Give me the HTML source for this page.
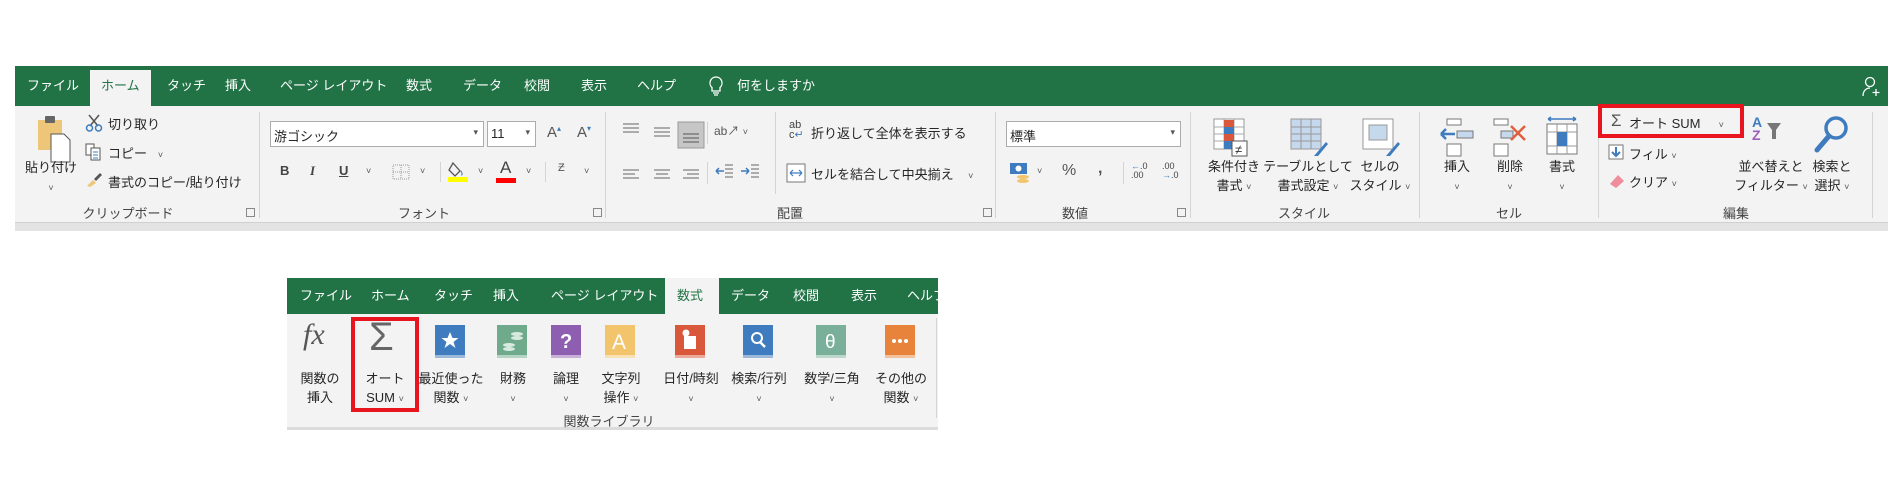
<!DOCTYPE html>
<html><head><meta charset="utf-8"><style>
*{margin:0;padding:0;box-sizing:border-box}
body{width:1900px;height:491px;background:#fff;position:relative;overflow:hidden;font-family:"Liberation Sans","Noto Sans CJK JP",sans-serif;font-size:13px;color:#262626}
.a{position:absolute;white-space:nowrap}
.g{background:#217346}
.tab{position:absolute;color:#fff;font-size:13px;top:0;line-height:40px}
.sep{position:absolute;width:1px;background:#d4d4d4}
.lbl{position:absolute;font-size:13px;color:#444;transform:translateX(-50%)}
.c{transform:translateX(-50%);text-align:center;line-height:19px}
.chev{font-size:9px;color:#555}
.dl{position:absolute;width:9px;height:9px;border:1px solid #888}
.box{position:absolute;background:#fff;border:1px solid #acacac}
</style></head><body>

<!-- TOP RIBBON -->
<div class="a g" style="left:15px;top:66px;width:1873px;height:40px">
 <span class="tab" style="left:12px">ファイル</span>
 <div style="position:absolute;left:75px;top:4px;width:61px;height:36px;background:#f3f3f3"></div>
 <span class="tab" style="left:86px;color:#217346">ホーム</span>
 <span class="tab" style="left:152px">タッチ</span>
 <span class="tab" style="left:210px">挿入</span>
 <span class="tab" style="left:265px">ページ レイアウト</span>
 <span class="tab" style="left:391px">数式</span>
 <span class="tab" style="left:448px">データ</span>
 <span class="tab" style="left:509px">校閲</span>
 <span class="tab" style="left:566px">表示</span>
 <span class="tab" style="left:622px">ヘルプ</span>
 <svg class="a" style="left:694px;top:10px" width="14" height="20" viewBox="0 0 14 20"><path d="M7 1a6 6 0 0 0-4 10.5V15h8v-3.5A6 6 0 0 0 7 1zM4 17h6M5 19h4" fill="none" stroke="#fff" stroke-width="1.3"/></svg>
 <span class="tab" style="left:722px">何をしますか</span>
 <svg class="a" style="left:1847px;top:10px" width="22" height="22" viewBox="0 0 22 22"><circle cx="8" cy="6" r="4.5" fill="none" stroke="#fff" stroke-width="1.3"/><path d="M1 20c0-5 3-8 7-8M14 13v7M10.5 16.5h7" fill="none" stroke="#fff" stroke-width="1.3"/></svg>
</div>
<div class="a" style="left:15px;top:106px;width:1873px;height:116px;background:#f3f3f3"></div>
<div class="a" style="left:15px;top:222px;width:1873px;height:9px;background:#e3e3e3;border-top:1px solid #d0d0d0"></div>

<!-- separators -->
<div class="sep" style="left:259px;top:112px;height:106px"></div>
<div class="sep" style="left:605px;top:112px;height:106px"></div>
<div class="sep" style="left:995px;top:112px;height:106px"></div>
<div class="sep" style="left:1190px;top:112px;height:106px"></div>
<div class="sep" style="left:1419px;top:112px;height:106px"></div>
<div class="sep" style="left:1598px;top:112px;height:106px"></div>
<div class="sep" style="left:1872px;top:112px;height:106px"></div>

<!-- group labels -->
<span class="lbl" style="left:128px;top:203px">クリップボード</span>
<span class="lbl" style="left:424px;top:203px">フォント</span>
<span class="lbl" style="left:790px;top:203px">配置</span>
<span class="lbl" style="left:1075px;top:203px">数値</span>
<span class="lbl" style="left:1304px;top:203px">スタイル</span>
<span class="lbl" style="left:1509px;top:203px">セル</span>
<span class="lbl" style="left:1736px;top:203px">編集</span>
<div class="dl" style="left:246px;top:208px"></div>
<div class="dl" style="left:593px;top:208px"></div>
<div class="dl" style="left:983px;top:208px"></div>
<div class="dl" style="left:1177px;top:208px"></div>

<!-- Clipboard -->
<svg class="a" style="left:36px;top:114px" width="40" height="52" viewBox="0 0 40 52"><rect x="2" y="6" width="24" height="30" fill="#eec67a"/><rect x="9" y="2" width="10" height="7" rx="1" fill="#666"/><path d="M15 20h13l6 6v22H15z" fill="#fff" stroke="#555"/></svg>
<span class="a c" style="left:51px;top:158px">貼り付け<br><span class="chev">˅</span></span>
<svg class="a" style="left:85px;top:114px" width="18" height="18" viewBox="0 0 18 18"><path d="M4 1l9 11M14 1L5 12" stroke="#555" stroke-width="1.5"/><circle cx="4.5" cy="14" r="3" fill="none" stroke="#3e7bbf" stroke-width="1.5"/><circle cx="13.5" cy="14" r="3" fill="none" stroke="#3e7bbf" stroke-width="1.5"/></svg>
<span class="a" style="left:108px;top:114px">切り取り</span>
<svg class="a" style="left:85px;top:143px" width="18" height="18" viewBox="0 0 18 18"><path d="M1 1h8v11H1z" fill="#fff" stroke="#555"/><path d="M6 5h9v12H6z" fill="#fff" stroke="#555"/><path d="M8 9h5M8 12h5M8 15h5" stroke="#3e7bbf"/></svg>
<span class="a" style="left:108px;top:143px">コピー &nbsp; <span class="chev">˅</span></span>
<svg class="a" style="left:85px;top:172px" width="18" height="16" viewBox="0 0 18 16"><path d="M2 14l6-6 3 3-6 4z" fill="#eec67a"/><path d="M9 7l6-6 2 2-6 6z" fill="#555"/></svg>
<span class="a" style="left:108px;top:172px">書式のコピー/貼り付け</span>

<!-- Font -->
<div class="box" style="left:270px;top:121px;width:214px;height:26px"><span class="a" style="left:3px;top:4px">游ゴシック</span><span class="a chev" style="right:5px;top:5px">▾</span></div>
<div class="box" style="left:487px;top:121px;width:49px;height:26px"><span class="a" style="left:3px;top:4px">11</span><span class="a chev" style="right:5px;top:5px">▾</span></div>
<span class="a" style="left:547px;top:124px;font-size:15px;color:#555">A<sup style="font-size:8px;color:#3e7bbf">▴</sup></span>
<span class="a" style="left:577px;top:124px;font-size:15px;color:#555">A<sup style="font-size:8px;color:#3e7bbf">▾</sup></span>
<span class="a" style="left:280px;top:163px;font-weight:bold;color:#444">B</span>
<span class="a" style="left:310px;top:163px;font-style:italic;font-family:'Liberation Serif',serif;font-weight:bold;color:#444">I</span>
<span class="a" style="left:339px;top:163px;text-decoration:underline;font-weight:bold;color:#444">U</span>
<span class="a chev" style="left:366px;top:166px">˅</span>
<svg class="a" style="left:392px;top:164px" width="18" height="16"><rect x="1" y="1" width="16" height="14" fill="none" stroke="#999" stroke-dasharray="1 1"/><path d="M9 1v14M1 8h16" stroke="#999" stroke-dasharray="1 1"/></svg>
<span class="a chev" style="left:420px;top:166px">˅</span>
<div class="sep" style="left:440px;top:162px;height:20px"></div>
<svg class="a" style="left:448px;top:159px" width="22" height="24"><path d="M5 4l7 8-5 5-6-6z" fill="none" stroke="#555" stroke-width="1.3"/><path d="M13 12c1 2 2 4 0 4" stroke="#3e7bbf" fill="none"/><rect x="0" y="18" width="20" height="5" fill="#ffff00"/></svg>
<span class="a chev" style="left:478px;top:166px">˅</span>
<span class="a" style="left:500px;top:158px;font-size:17px;color:#444">A</span>
<div class="a" style="left:496px;top:178px;width:20px;height:5px;background:#ff0000"></div>
<span class="a chev" style="left:526px;top:166px">˅</span>
<div class="sep" style="left:545px;top:162px;height:20px"></div>
<span class="a" style="left:558px;top:162px;font-size:11px;color:#555">Ƶ</span>
<span class="a chev" style="left:584px;top:166px">˅</span>

<!-- Alignment -->
<svg class="a" style="left:621px;top:120px" width="100" height="70" viewBox="0 0 100 70">
 <g stroke="#666" stroke-width="1"><path d="M2 4h16M2 8h16M2 12h16"/><path d="M33 8h16M33 12h16M33 16h16"/></g>
 <rect x="57" y="2" width="26" height="26" fill="#c6c6c6" stroke="#999"/><path d="M62 14h16M62 18h16M62 22h16" stroke="#555"/>
 <g stroke="#666"><path d="M2 50h16M2 54h12M2 58h16"/><path d="M33 50h16M35 54h12M33 58h16"/><path d="M62 50h16M66 54h12M62 58h16"/></g>
</svg>
<div class="sep" style="left:707px;top:122px;height:22px"></div>
<span class="a" style="left:714px;top:122px;color:#555;font-size:12px">ab↗ <span class="chev">˅</span></span>
<svg class="a" style="left:714px;top:162px" width="45" height="20"><g stroke="#3e7bbf" stroke-width="1.5"><path d="M2 9h8M2 9l3-3M2 9l3 3M27 9h8M35 9l-3-3M35 9l-3 3"/></g><path d="M11 3h8M11 7h8M11 11h8M11 15h8M37 3h8M37 7h8M37 11h8M37 15h8" stroke="#666"/></svg>
<div class="sep" style="left:740px;top:162px;height:22px;left:707px"></div>
<div class="sep" style="left:775px;top:112px;height:82px"></div>
<span class="a" style="left:789px;top:120px;font-size:11px;line-height:10px;color:#444">ab<br>c<span style="color:#3e7bbf">↵</span></span>
<span class="a" style="left:811px;top:123px">折り返して全体を表示する</span>
<svg class="a" style="left:786px;top:163px" width="20" height="20"><rect x="1" y="1" width="18" height="18" fill="#fff" stroke="#777"/><path d="M4 10h12M4 10l3-3M4 10l3 3M16 10l-3-3M16 10l-3 3" stroke="#3e7bbf" stroke-width="1.2" fill="none"/></svg>
<span class="a" style="left:811px;top:164px">セルを結合して中央揃え &nbsp; &nbsp;<span class="chev">˅</span></span>

<!-- Number -->
<div class="box" style="left:1006px;top:121px;width:175px;height:26px"><span class="a" style="left:3px;top:4px">標準</span><span class="a chev" style="right:5px;top:5px">▾</span></div>
<svg class="a" style="left:1009px;top:162px" width="22" height="22"><rect x="1" y="1" width="17" height="11" fill="#3e7bbf"/><circle cx="9.5" cy="6.5" r="3" fill="#fff"/><ellipse cx="14" cy="15" rx="6" ry="2" fill="#f2c46b"/><ellipse cx="14" cy="19" rx="6" ry="2" fill="#f2c46b"/></svg>
<span class="a chev" style="left:1037px;top:166px">˅</span>
<span class="a" style="left:1062px;top:162px;font-size:16px;color:#555">%</span>
<span class="a" style="left:1098px;top:160px;font-size:16px;font-weight:bold;color:#555">,</span>
<div class="sep" style="left:1123px;top:162px;height:22px"></div>
<span class="a" style="left:1131px;top:162px;font-size:9px;line-height:9px;color:#444"><span style="color:#3e7bbf">←</span>.0<br>.00</span>
<span class="a" style="left:1162px;top:162px;font-size:9px;line-height:9px;color:#444">.00<br><span style="color:#3e7bbf">→</span>.0</span>

<!-- Styles -->
<svg class="a" style="left:1213px;top:118px" width="36" height="40"><g fill="#fff" stroke="#999"><rect x="1" y="1" width="30" height="30"/></g><path d="M1 9h30M1 16h30M1 23h30M11 1v30M21 1v30" stroke="#aaa"/><rect x="11" y="2" width="10" height="7" fill="#d9573a"/><rect x="11" y="9" width="10" height="7" fill="#3e7bbf"/><rect x="11" y="16" width="10" height="7" fill="#d9573a"/><rect x="11" y="23" width="10" height="8" fill="#3e7bbf"/><rect x="19" y="23" width="15" height="15" fill="#fff" stroke="#555"/><text x="22" y="36" font-size="13" fill="#333">≠</text></svg>
<span class="a c" style="left:1234px;top:157px">条件付き<br>書式 <span class="chev">˅</span></span>
<svg class="a" style="left:1290px;top:118px" width="38" height="40"><rect x="1" y="1" width="30" height="30" fill="#c5d8ec" stroke="#999"/><path d="M1 9h30M1 16h30M1 23h30M11 1v30M21 1v30" stroke="#999"/><path d="M24 38l12-14 2 2-10 12z" fill="#3e7bbf"/></svg>
<span class="a c" style="left:1308px;top:157px">テーブルとして<br>書式設定 <span class="chev">˅</span></span>
<svg class="a" style="left:1362px;top:118px" width="38" height="40"><rect x="1" y="1" width="30" height="30" fill="#fff" stroke="#999"/><rect x="7" y="7" width="18" height="15" fill="#c5d8ec" stroke="#999"/><path d="M24 38l12-14 2 2-10 12z" fill="#3e7bbf"/></svg>
<span class="a c" style="left:1380px;top:157px">セルの<br>スタイル <span class="chev">˅</span></span>

<!-- Cells -->
<svg class="a" style="left:1440px;top:118px" width="34" height="40"><g fill="#fff" stroke="#777"><rect x="7" y="1" width="14" height="6"/><rect x="7" y="26" width="14" height="12"/><rect x="17" y="13" width="16" height="7" fill="#c5d8ec"/></g><path d="M1 16h14M1 16l5-5M1 16l5 5" stroke="#3e7bbf" stroke-width="2.5" fill="none"/></svg>
<span class="a c" style="left:1457px;top:157px">挿入<br><span class="chev">˅</span></span>
<svg class="a" style="left:1493px;top:118px" width="36" height="40"><g fill="#fff" stroke="#777"><rect x="1" y="1" width="14" height="6"/><rect x="1" y="26" width="14" height="12"/><rect x="8" y="13" width="12" height="7" fill="#c5d8ec"/></g><path d="M18 8l14 14M32 8L18 22" stroke="#e0603e" stroke-width="2.5"/></svg>
<span class="a c" style="left:1510px;top:157px">削除<br><span class="chev">˅</span></span>
<svg class="a" style="left:1545px;top:116px" width="34" height="42"><path d="M3 3h28M3 3l3-2M3 3l3 2M31 3l-3-2M31 3l-3 2" stroke="#3e7bbf" stroke-width="1.5" fill="none"/><rect x="2" y="8" width="30" height="30" fill="#fff" stroke="#777"/><path d="M2 16h30M2 30h30M12 8v30M22 8v30" stroke="#999"/><rect x="12" y="16" width="10" height="14" fill="#3e7bbf"/></svg>
<span class="a c" style="left:1562px;top:157px">書式<br><span class="chev">˅</span></span>

<!-- Editing -->
<div class="a" style="left:1598px;top:104px;width:146px;height:34px;border:4px solid #e8141e"></div>
<span class="a" style="left:1611px;top:112px;font-size:17px;color:#555;line-height:18px">Σ</span>
<span class="a" style="left:1629px;top:113px">オート SUM &nbsp; &nbsp; <span class="chev">˅</span></span>
<svg class="a" style="left:1608px;top:144px" width="16" height="16"><rect x="1" y="1" width="14" height="14" fill="#fff" stroke="#777"/><path d="M8 3v9M4 8l4 4 4-4" stroke="#3e7bbf" stroke-width="2" fill="none"/></svg>
<span class="a" style="left:1629px;top:144px">フィル <span class="chev">˅</span></span>
<svg class="a" style="left:1608px;top:173px" width="18" height="16"><path d="M2 11l8-9 6 6-8 7z" fill="#ef8d9a"/></svg>
<span class="a" style="left:1629px;top:172px">クリア <span class="chev">˅</span></span>
<span class="a" style="left:1752px;top:116px;font-size:14px;font-weight:bold;line-height:13px;color:#3e7bbf">A<br><span style="color:#9a5fb8">Z</span></span>
<svg class="a" style="left:1766px;top:122px" width="16" height="18"><path d="M1 1h14l-5 7v9h-4V8z" fill="#777"/></svg>
<span class="a c" style="left:1771px;top:157px">並べ替えと<br>フィルター <span class="chev">˅</span></span>
<svg class="a" style="left:1812px;top:114px" width="38" height="42"><circle cx="24" cy="14" r="10" fill="none" stroke="#3e7bbf" stroke-width="3.5"/><path d="M17 22L5 36" stroke="#3e7bbf" stroke-width="5" stroke-linecap="round"/></svg>
<span class="a c" style="left:1832px;top:157px">検索と<br>選択 <span class="chev">˅</span></span>

<!-- SECOND RIBBON -->
<div class="a g" style="left:287px;top:278px;width:651px;height:36px;overflow:hidden">
 <div style="position:absolute;left:378px;top:0;width:54px;height:36px;background:#f3f3f3"></div>
 <span class="tab" style="left:13px;line-height:36px">ファイル</span>
 <span class="tab" style="left:84px;line-height:36px">ホーム</span>
 <span class="tab" style="left:147px;line-height:36px">タッチ</span>
 <span class="tab" style="left:206px;line-height:36px">挿入</span>
 <span class="tab" style="left:264px;line-height:36px">ページ レイアウト</span>
 <span class="tab" style="left:390px;line-height:36px;color:#217346">数式</span>
 <span class="tab" style="left:444px;line-height:36px">データ</span>
 <span class="tab" style="left:506px;line-height:36px">校閲</span>
 <span class="tab" style="left:564px;line-height:36px">表示</span>
 <span class="tab" style="left:620px;line-height:36px">ヘルプ</span>
</div>
<div class="a" style="left:287px;top:314px;width:651px;height:113px;background:#f3f3f3"></div>
<div class="a" style="left:287px;top:427px;width:651px;height:3px;background:#dcdcdc"></div>
<div class="sep" style="left:936px;top:318px;height:100px"></div>

<span class="a" style="left:303px;top:318px;font-family:'Liberation Serif',serif;font-style:italic;font-size:30px;color:#555">fx</span>
<span class="a c" style="left:320px;top:369px">関数の<br>挿入</span>
<div class="a" style="left:351px;top:317px;width:68px;height:95px;border:4px solid #e8141e"></div>
<span class="a" style="left:369px;top:314px;font-size:40px;color:#666;line-height:46px">Σ</span>
<span class="a c" style="left:385px;top:369px">オート<br>SUM <span class="chev">˅</span></span>

<svg class="a" style="left:434px;top:325px" width="34" height="34"><rect x="1" y="0" width="30" height="30" fill="#3e7bbf"/><rect x="1" y="30" width="30" height="3" fill="#9cb9d9"/><path d="M16 7l2.5 6h6l-5 4 2 6-5.5-4-5.5 4 2-6-5-4h6z" fill="#fff"/></svg>
<span class="a c" style="left:451px;top:369px">最近使った<br>関数 <span class="chev">˅</span></span>
<svg class="a" style="left:496px;top:325px" width="34" height="34"><rect x="1" y="0" width="30" height="30" fill="#6faa8c"/><rect x="1" y="30" width="30" height="3" fill="#b5d5c4"/><g fill="#d8e9df"><ellipse cx="13" cy="20" rx="6" ry="2"/><ellipse cx="13" cy="24" rx="6" ry="2"/><ellipse cx="21" cy="9" rx="6" ry="2"/><ellipse cx="21" cy="13" rx="6" ry="2"/></g></svg>
<span class="a c" style="left:513px;top:369px">財務<br><span class="chev">˅</span></span>
<svg class="a" style="left:550px;top:325px" width="34" height="34"><rect x="1" y="0" width="30" height="30" fill="#8e5fb0"/><rect x="1" y="30" width="30" height="3" fill="#c8b0d8"/><text x="10" y="23" font-size="20" font-weight="bold" fill="#fff" font-family="Liberation Sans">?</text></svg>
<span class="a c" style="left:566px;top:369px">論理<br><span class="chev">˅</span></span>
<svg class="a" style="left:604px;top:325px" width="34" height="34"><rect x="1" y="0" width="30" height="30" fill="#f2c46b"/><rect x="1" y="30" width="30" height="3" fill="#f8e2b5"/><text x="8" y="24" font-size="21" fill="#fff" font-family="Liberation Sans">A</text></svg>
<span class="a c" style="left:621px;top:369px">文字列<br>操作 <span class="chev">˅</span></span>
<svg class="a" style="left:674px;top:325px" width="34" height="34"><rect x="1" y="0" width="30" height="30" fill="#d9573a"/><rect x="1" y="30" width="30" height="3" fill="#eba999"/><rect x="10" y="11" width="12" height="13" fill="#fff"/><circle cx="12" cy="8" r="3.5" fill="#fff"/></svg>
<span class="a c" style="left:691px;top:369px">日付/時刻<br><span class="chev">˅</span></span>
<svg class="a" style="left:742px;top:325px" width="34" height="34"><rect x="1" y="0" width="30" height="30" fill="#3e7bbf"/><rect x="1" y="30" width="30" height="3" fill="#9cb9d9"/><circle cx="15" cy="13" r="5" fill="none" stroke="#fff" stroke-width="2"/><path d="M18 17l5 5" stroke="#fff" stroke-width="2.5"/></svg>
<span class="a c" style="left:759px;top:369px">検索/行列<br><span class="chev">˅</span></span>
<svg class="a" style="left:815px;top:325px" width="34" height="34"><rect x="1" y="0" width="30" height="30" fill="#7ab09a"/><rect x="1" y="30" width="30" height="3" fill="#bdd7cc"/><text x="10" y="23" font-size="19" fill="#fff" font-family="Liberation Sans">θ</text></svg>
<span class="a c" style="left:832px;top:369px">数学/三角<br><span class="chev">˅</span></span>
<svg class="a" style="left:884px;top:325px" width="34" height="34"><rect x="1" y="0" width="30" height="30" fill="#e8833b"/><rect x="1" y="30" width="30" height="3" fill="#f4c19d"/><circle cx="10" cy="16" r="2" fill="#fff"/><circle cx="16" cy="16" r="2" fill="#fff"/><circle cx="22" cy="16" r="2" fill="#fff"/></svg>
<span class="a c" style="left:901px;top:369px">その他の<br>関数 <span class="chev">˅</span></span>
<span class="lbl" style="left:609px;top:411px">関数ライブラリ</span>

</body></html>
